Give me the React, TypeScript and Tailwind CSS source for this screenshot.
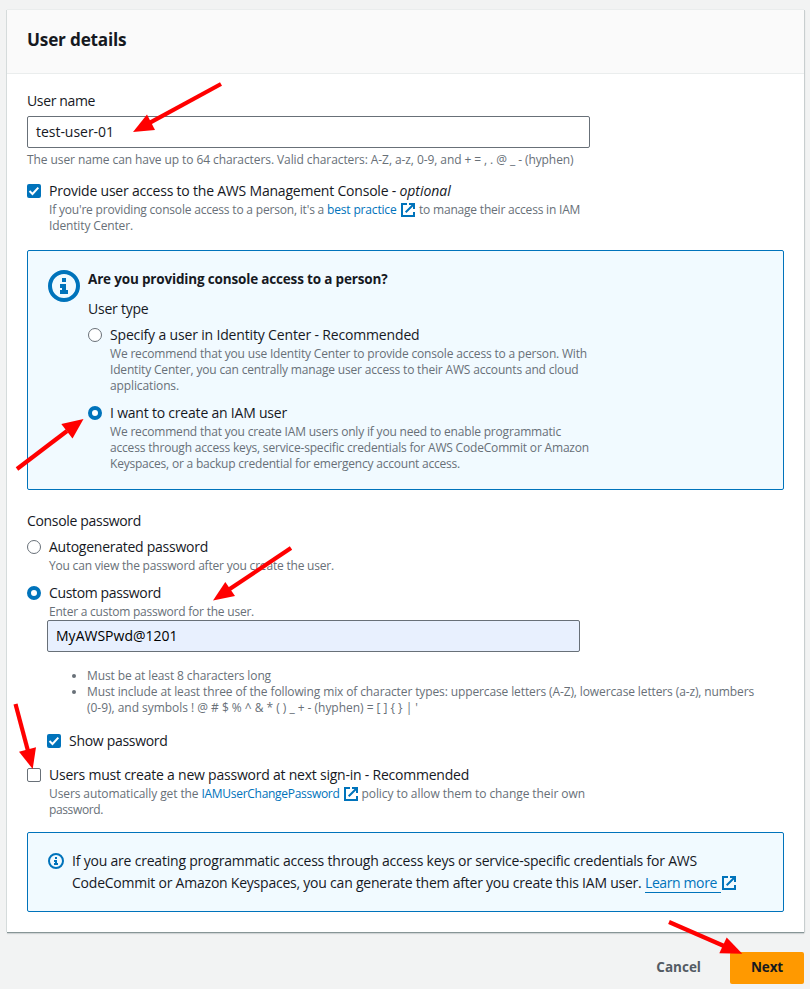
import type { ReactNode } from "react";

function Line({ track, children }: { track: string; children: ReactNode }) {
  return <span className={`inline-block whitespace-pre ${track}`}>{children}</span>;
}

function Label({ track, children }: { track: string; children: ReactNode }) {
  return <div className={`h-[22px] whitespace-pre text-[14px] leading-[22px] text-[#16191f] ${track}`}>{children}</div>;
}

function Hint({ track, children }: { track: string; children: ReactNode }) {
  return <div className={`flex h-4 items-center whitespace-pre text-[12px] leading-4 text-[#687078] ${track}`}>{children}</div>;
}

function Checkbox({ checked }: { checked?: boolean }) {
  return (
    <svg className="mt-1 size-[14px] shrink-0" viewBox="0 0 14 14">
      {checked ? (
        <>
          <rect width="14" height="14" rx="2" fill="#0073bb" />
          <path d="M2.5 7 L5.5 10 L11.3 3.6" fill="none" stroke="#fff" strokeWidth="2" />
        </>
      ) : (
        <rect x="0.5" y="0.5" width="13" height="13" rx="1.5" fill="#fff" stroke="#687078" />
      )}
    </svg>
  );
}

function Radio({ checked }: { checked?: boolean }) {
  return (
    <svg className="mt-1 size-[14px] shrink-0" viewBox="0 0 14 14">
      {checked ? (
        <circle cx="7" cy="7" r="5" fill="#fff" stroke="#0073bb" strokeWidth="4" />
      ) : (
        <circle cx="7" cy="7" r="6.5" fill="#fff" stroke="#687078" />
      )}
    </svg>
  );
}

function External({ className }: { className: string }) {
  return (
    <svg className={`size-[14px] shrink-0 ${className}`} viewBox="0 0 14 14" fill="none" stroke="#0073bb" strokeWidth="2">
      <path d="M6 1H1v12h12V9" />
      <path d="M8 1h5v5M13 1L4.7 9.3" />
    </svg>
  );
}

function BigInfo() {
  return (
    <svg className="mt-[3px] size-8 shrink-0" viewBox="0 0 32 32">
      <circle cx="16" cy="16" r="14" fill="none" stroke="#0073bb" strokeWidth="4" />
      <path d="M14 8h4v4h-4zM12 14h6v6h2v4h-8v-4h2v-2h-2z" fill="#0073bb" />
    </svg>
  );
}

function SmallInfo() {
  return (
    <svg className="mt-[3px] size-4 shrink-0" viewBox="0 0 16 16">
      <circle cx="8" cy="8" r="7" fill="none" stroke="#0073bb" strokeWidth="2" />
      <path d="M7 4h2v2H7zM6 7h3v3h1v2H6v-2h1V9H6z" fill="#0073bb" />
    </svg>
  );
}

const arrows = [
  { tail: [221, 84], neck: [150, 122.7], head: "133,132 147,114.5 155,130" },
  { tail: [17, 469], neck: [67, 431], head: "83.5,419 72.5,438.5 61.3,424" },
  { tail: [291, 548], neck: [229, 589.5], head: "213,600.5 225.3,582 235,596" },
  { tail: [15.5, 704], neck: [28, 751], head: "32.7,769 19,751.7 36,747.3" },
  { tail: [669, 922], neck: [724, 946], head: "742.3,953.8 726.7,937.5 719.3,953.3" },
];

function Arrows() {
  return (
    <svg className="pointer-events-none absolute inset-0 h-[989px] w-[810px]" viewBox="0 0 810 989">
      {arrows.map((a) => (
        <g key={a.head}>
          <line x1={a.tail[0]} y1={a.tail[1]} x2={a.neck[0]} y2={a.neck[1]} stroke="#f00" strokeWidth="4.2" />
          <polygon points={a.head} fill="#f00" />
        </g>
      ))}
    </svg>
  );
}

export default function App() {
  return (
    <div className="relative h-[989px] w-[810px] overflow-hidden bg-[#f2f3f3] pt-[10px] pl-[7px] font-['Open_Sans','Noto_Sans',sans-serif]">
      <section className="h-[922px] w-[797px] bg-white shadow-[0_1px_0_0_#879596,1px_0_0_0_#c8cecf,-1px_0_0_0_#d5dbdb,0_-1px_0_0_#eaeded,0_2px_1px_0_rgba(0,28,36,0.12),1px_1px_1px_0_rgba(0,28,36,0.12)]">
        <header className="flex h-16 items-center border-b border-[#eaeded] bg-[#fafafa] px-5 pb-1">
          <h2 className="text-[17.2px] leading-[22px] font-bold tracking-[-0.2px] text-[#16191f]">User details</h2>
        </header>

        <div className="flex flex-col px-5 pt-4">
          <Label track="tracking-[-0.36px]">User name</Label>
          <div className="mt-1 flex h-8 w-[563px] items-center rounded-[2px] border border-[#687078] bg-white px-2 pb-[2px] text-[14px] text-[#16191f]">
            <Line track="tracking-[-0.03px]">test-user-01</Line>
          </div>
          <div className="mt-1">
            <Hint track="tracking-[-0.084px]">{"The user name can have up to 64 characters. Valid characters: A-Z, a-z, 0-9, and + = , . @ _ - (hyphen)"}</Hint>
          </div>

          <div className="mt-3 flex gap-2">
            <Checkbox checked />
            <div>
              <Label track="tracking-[-0.206px]">
                Provide user access to the AWS Management Console - <em className="tracking-[-0.05px]">optional</em>
              </Label>
              <Hint track="tracking-[-0.189px]">
                <span>{"If you're providing console access to a person, it's a "}</span>
                <a className="w-[70px] tracking-[-0.165px] text-[#0073bb]">best practice</a>
                <External className="mr-1 ml-1" />
                <Line track="tracking-[-0.2px]">to manage their access in IAM</Line>
              </Hint>
              <Hint track="tracking-[-0.14px]">Identity Center.</Hint>
            </div>
          </div>

          <div className="mt-4 flex h-60 w-[757px] gap-2 rounded-[2px] border border-[#0073bb] bg-[#f1faff] pt-4 pl-5">
            <BigInfo />
            <div>
              <h3 className="mt-px h-[22px] text-[13.5px] leading-[22px] font-bold tracking-[-0.17px] whitespace-pre text-[#16191f]">
                Are you providing console access to a person?
              </h3>
              <div className="mt-2">
                <Label track="tracking-[-0.225px]">User type</Label>
              </div>
              <div className="mt-1 flex gap-2">
                <Radio />
                <div>
                  <Label track="tracking-[-0.161px]">Specify a user in Identity Center - Recommended</Label>
                  <Hint track="tracking-[-0.182px]">We recommend that you use Identity Center to provide console access to a person. With</Hint>
                  <Hint track="tracking-[-0.171px]">Identity Center, you can centrally manage user access to their AWS accounts and cloud</Hint>
                  <Hint track="tracking-[-0.122px]">applications.</Hint>
                </div>
              </div>
              <div className="mt-2 flex gap-2">
                <Radio checked />
                <div>
                  <Label track="tracking-[-0.208px]">I want to create an IAM user</Label>
                  <Hint track="tracking-[-0.184px]">We recommend that you create IAM users only if you need to enable programmatic</Hint>
                  <Hint track="tracking-[-0.184px]">access through access keys, service-specific credentials for AWS CodeCommit or Amazon</Hint>
                  <Hint track="tracking-[-0.212px]">Keyspaces, or a backup credential for emergency account access.</Hint>
                </div>
              </div>
            </div>
          </div>

          <div className="mt-5">
            <Label track="tracking-[-0.325px]">Console password</Label>
          </div>
          <div className="mt-1 flex gap-2">
            <Radio />
            <div>
              <Label track="tracking-[-0.253px]">Autogenerated password</Label>
              <Hint track="tracking-[-0.198px]">You can view the password after you create the user.</Hint>
            </div>
          </div>
          <div className="mt-2 flex gap-2">
            <Radio checked />
            <div>
              <Label track="tracking-[-0.355px]">Custom password</Label>
              <Hint track="tracking-[-0.226px]">Enter a custom password for the user.</Hint>
            </div>
          </div>

          <div className="flex flex-col pl-5">
            <div className="flex h-8 w-[533px] items-center rounded-[2px] border border-[#687078] bg-[#e8f0fe] px-2 pb-[2px] text-[14px] text-black">
              <Line track="tracking-[0.01px]">MyAWSPwd@1201</Line>
            </div>
            <ul className="mt-4 list-disc pl-10 marker:text-[#687078]">
              <li className="text-[12px] leading-4">
                <Hint track="tracking-[-0.118px]">Must be at least 8 characters long</Hint>
              </li>
              <li className="text-[12px] leading-4">
                <Hint track="tracking-[-0.118px]">Must include at least three of the following mix of character types: uppercase letters (A-Z), lowercase letters (a-z), numbers</Hint>
                <Hint track="tracking-[-0.03px]">{"(0-9), and symbols ! @ # $ % ^ & * ( ) _ + - (hyphen) = [ ] { } | '"}</Hint>
              </li>
            </ul>
            <div className="mt-[14px] flex gap-2">
              <Checkbox checked />
              <Label track="tracking-[-0.301px]">Show password</Label>
            </div>
          </div>

          <div className="mt-3 flex gap-2">
            <Checkbox />
            <div>
              <Label track="tracking-[-0.226px]">Users must create a new password at next sign-in - Recommended</Label>
              <Hint track="tracking-[-0.1px]">
                <span>{"Users automatically get the "}</span>
                <a className="w-[138px] tracking-[-0.292px] text-[#0073bb]">IAMUserChangePassword</a>
                <External className="mr-1 ml-1" />
                <Line track="tracking-[-0.075px]">policy to allow them to change their own</Line>
              </Hint>
              <Hint track="tracking-[-0.374px]">password.</Hint>
            </div>
          </div>

          <div className="mt-[14px] flex h-20 w-[757px] gap-2 rounded-[2px] border border-[#0073bb] bg-[#f1faff] pt-[17px] pl-5">
            <SmallInfo />
            <div>
              <Label track="tracking-[-0.206px]">If you are creating programmatic access through access keys or service-specific credentials for AWS</Label>
              <div className="flex">
                <Label track="tracking-[-0.225px]">{"CodeCommit or Amazon Keyspaces, you can generate them after you create this IAM user. "}</Label>
                <a className="h-[21px] w-[76px] border-b border-[#0073bb] text-[14px] leading-[22px] tracking-[-0.386px] whitespace-pre text-[#0073bb]">Learn more</a>
                <External className="mt-1 ml-[1px]" />
              </div>
            </div>
          </div>
        </div>
      </section>

      <footer className="mt-5 flex h-8 w-[797px] items-center justify-end text-[13.5px] font-bold">
        <button className="mr-[29px] h-8 pb-[2px] text-[#545b64]">Cancel</button>
        <button className="h-8 w-[74px] rounded-[2px] bg-[#ff9900] pb-[2px] tracking-[-0.1px] text-[#16191f]">Next</button>
      </footer>
      <Arrows />
    </div>
  );
}
